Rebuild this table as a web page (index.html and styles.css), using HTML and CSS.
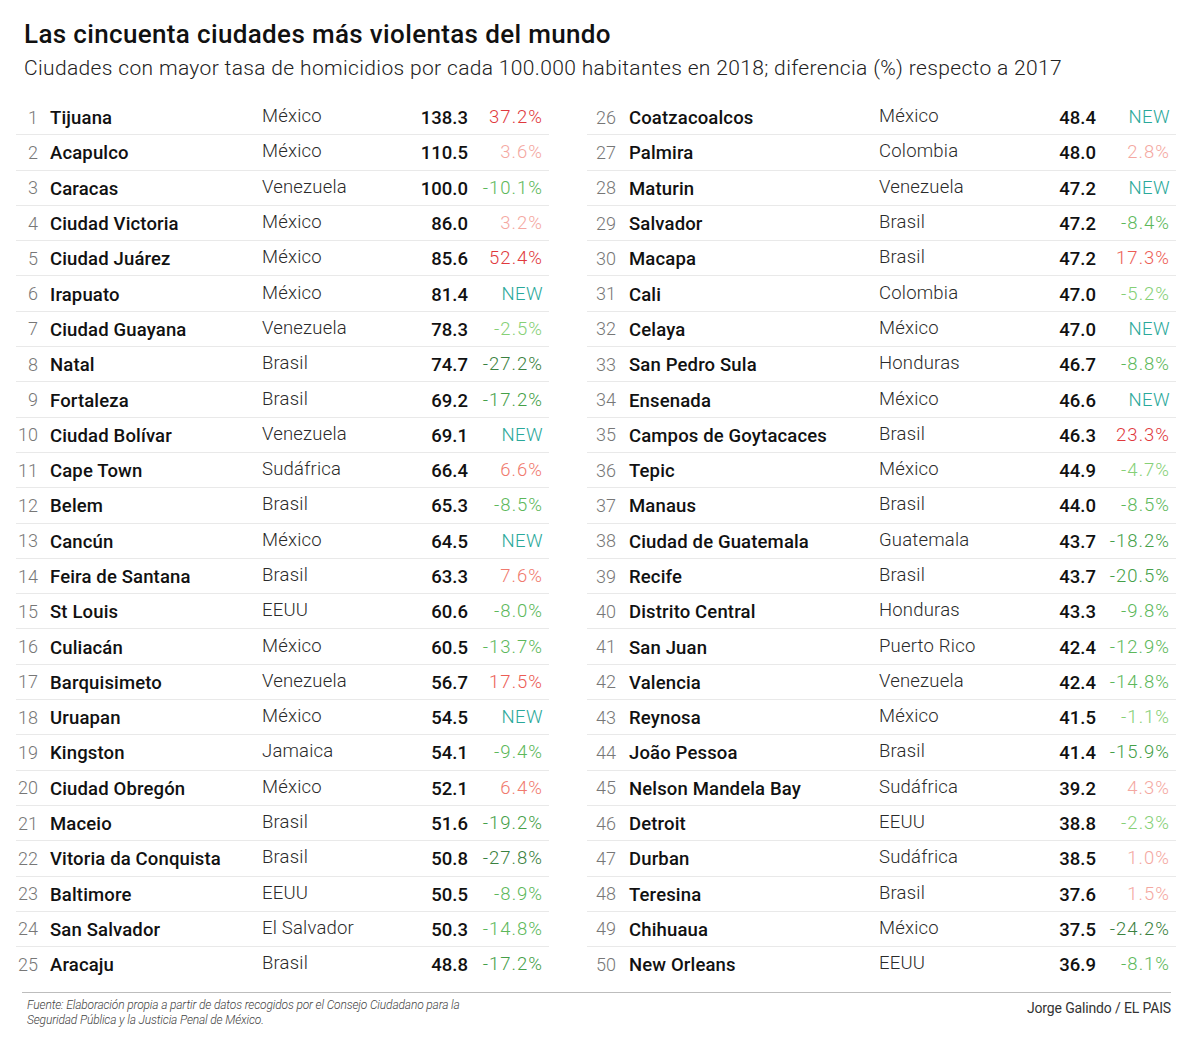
FILE: index.html
```html
<!DOCTYPE html>
<html lang="es">
<head>
<meta charset="utf-8">
<title>Las cincuenta ciudades más violentas del mundo</title>
<link rel="stylesheet" href="styles.css">
</head>
<body>
<header class="head">
  <h1 class="title">Las cincuenta ciudades más violentas del mundo</h1>
  <p class="subtitle">Ciudades con mayor tasa de homicidios por cada 100.000 habitantes en 2018; diferencia (%) respecto a 2017</p>
</header>
<main class="tables">
  <div class="col col-left">
    <div class="row"><span class="rk">1</span><span class="city">Tijuana</span><span class="ctry">México</span><span class="val">138.3</span><span class="pct u4">37.2%</span></div>
    <div class="row"><span class="rk">2</span><span class="city">Acapulco</span><span class="ctry">México</span><span class="val">110.5</span><span class="pct u1">3.6%</span></div>
    <div class="row"><span class="rk">3</span><span class="city">Caracas</span><span class="ctry">Venezuela</span><span class="val">100.0</span><span class="pct d2">-10.1%</span></div>
    <div class="row"><span class="rk">4</span><span class="city">Ciudad Victoria</span><span class="ctry">México</span><span class="val">86.0</span><span class="pct u1">3.2%</span></div>
    <div class="row"><span class="rk">5</span><span class="city">Ciudad Juárez</span><span class="ctry">México</span><span class="val">85.6</span><span class="pct u4">52.4%</span></div>
    <div class="row"><span class="rk">6</span><span class="city">Irapuato</span><span class="ctry">México</span><span class="val">81.4</span><span class="pct new">NEW</span></div>
    <div class="row"><span class="rk">7</span><span class="city">Ciudad Guayana</span><span class="ctry">Venezuela</span><span class="val">78.3</span><span class="pct d1">-2.5%</span></div>
    <div class="row"><span class="rk">8</span><span class="city">Natal</span><span class="ctry">Brasil</span><span class="val">74.7</span><span class="pct d4">-27.2%</span></div>
    <div class="row"><span class="rk">9</span><span class="city">Fortaleza</span><span class="ctry">Brasil</span><span class="val">69.2</span><span class="pct d3">-17.2%</span></div>
    <div class="row"><span class="rk">10</span><span class="city">Ciudad Bolívar</span><span class="ctry">Venezuela</span><span class="val">69.1</span><span class="pct new">NEW</span></div>
    <div class="row"><span class="rk">11</span><span class="city">Cape Town</span><span class="ctry">Sudáfrica</span><span class="val">66.4</span><span class="pct u2">6.6%</span></div>
    <div class="row"><span class="rk">12</span><span class="city">Belem</span><span class="ctry">Brasil</span><span class="val">65.3</span><span class="pct d2">-8.5%</span></div>
    <div class="row"><span class="rk">13</span><span class="city">Cancún</span><span class="ctry">México</span><span class="val">64.5</span><span class="pct new">NEW</span></div>
    <div class="row"><span class="rk">14</span><span class="city">Feira de Santana</span><span class="ctry">Brasil</span><span class="val">63.3</span><span class="pct u2">7.6%</span></div>
    <div class="row"><span class="rk">15</span><span class="city">St Louis</span><span class="ctry">EEUU</span><span class="val">60.6</span><span class="pct d2">-8.0%</span></div>
    <div class="row"><span class="rk">16</span><span class="city">Culiacán</span><span class="ctry">México</span><span class="val">60.5</span><span class="pct d2">-13.7%</span></div>
    <div class="row"><span class="rk">17</span><span class="city">Barquisimeto</span><span class="ctry">Venezuela</span><span class="val">56.7</span><span class="pct u3">17.5%</span></div>
    <div class="row"><span class="rk">18</span><span class="city">Uruapan</span><span class="ctry">México</span><span class="val">54.5</span><span class="pct new">NEW</span></div>
    <div class="row"><span class="rk">19</span><span class="city">Kingston</span><span class="ctry">Jamaica</span><span class="val">54.1</span><span class="pct d2">-9.4%</span></div>
    <div class="row"><span class="rk">20</span><span class="city">Ciudad Obregón</span><span class="ctry">México</span><span class="val">52.1</span><span class="pct u2">6.4%</span></div>
    <div class="row"><span class="rk">21</span><span class="city">Maceio</span><span class="ctry">Brasil</span><span class="val">51.6</span><span class="pct d3">-19.2%</span></div>
    <div class="row"><span class="rk">22</span><span class="city">Vitoria da Conquista</span><span class="ctry">Brasil</span><span class="val">50.8</span><span class="pct d4">-27.8%</span></div>
    <div class="row"><span class="rk">23</span><span class="city">Baltimore</span><span class="ctry">EEUU</span><span class="val">50.5</span><span class="pct d2">-8.9%</span></div>
    <div class="row"><span class="rk">24</span><span class="city">San Salvador</span><span class="ctry">El Salvador</span><span class="val">50.3</span><span class="pct d2">-14.8%</span></div>
    <div class="row"><span class="rk">25</span><span class="city">Aracaju</span><span class="ctry">Brasil</span><span class="val">48.8</span><span class="pct d3">-17.2%</span></div>
  </div>
  <div class="col col-right">
    <div class="row"><span class="rk">26</span><span class="city">Coatzacoalcos</span><span class="ctry">México</span><span class="val">48.4</span><span class="pct new">NEW</span></div>
    <div class="row"><span class="rk">27</span><span class="city">Palmira</span><span class="ctry">Colombia</span><span class="val">48.0</span><span class="pct u1">2.8%</span></div>
    <div class="row"><span class="rk">28</span><span class="city">Maturin</span><span class="ctry">Venezuela</span><span class="val">47.2</span><span class="pct new">NEW</span></div>
    <div class="row"><span class="rk">29</span><span class="city">Salvador</span><span class="ctry">Brasil</span><span class="val">47.2</span><span class="pct d2">-8.4%</span></div>
    <div class="row"><span class="rk">30</span><span class="city">Macapa</span><span class="ctry">Brasil</span><span class="val">47.2</span><span class="pct u3">17.3%</span></div>
    <div class="row"><span class="rk">31</span><span class="city">Cali</span><span class="ctry">Colombia</span><span class="val">47.0</span><span class="pct d1">-5.2%</span></div>
    <div class="row"><span class="rk">32</span><span class="city">Celaya</span><span class="ctry">México</span><span class="val">47.0</span><span class="pct new">NEW</span></div>
    <div class="row"><span class="rk">33</span><span class="city">San Pedro Sula</span><span class="ctry">Honduras</span><span class="val">46.7</span><span class="pct d2">-8.8%</span></div>
    <div class="row"><span class="rk">34</span><span class="city">Ensenada</span><span class="ctry">México</span><span class="val">46.6</span><span class="pct new">NEW</span></div>
    <div class="row"><span class="rk">35</span><span class="city">Campos de Goytacaces</span><span class="ctry">Brasil</span><span class="val">46.3</span><span class="pct u4">23.3%</span></div>
    <div class="row"><span class="rk">36</span><span class="city">Tepic</span><span class="ctry">México</span><span class="val">44.9</span><span class="pct d1">-4.7%</span></div>
    <div class="row"><span class="rk">37</span><span class="city">Manaus</span><span class="ctry">Brasil</span><span class="val">44.0</span><span class="pct d2">-8.5%</span></div>
    <div class="row"><span class="rk">38</span><span class="city">Ciudad de Guatemala</span><span class="ctry">Guatemala</span><span class="val">43.7</span><span class="pct d3">-18.2%</span></div>
    <div class="row"><span class="rk">39</span><span class="city">Recife</span><span class="ctry">Brasil</span><span class="val">43.7</span><span class="pct d3">-20.5%</span></div>
    <div class="row"><span class="rk">40</span><span class="city">Distrito Central</span><span class="ctry">Honduras</span><span class="val">43.3</span><span class="pct d2">-9.8%</span></div>
    <div class="row"><span class="rk">41</span><span class="city">San Juan</span><span class="ctry">Puerto Rico</span><span class="val">42.4</span><span class="pct d2">-12.9%</span></div>
    <div class="row"><span class="rk">42</span><span class="city">Valencia</span><span class="ctry">Venezuela</span><span class="val">42.4</span><span class="pct d2">-14.8%</span></div>
    <div class="row"><span class="rk">43</span><span class="city">Reynosa</span><span class="ctry">México</span><span class="val">41.5</span><span class="pct d1">-1.1%</span></div>
    <div class="row"><span class="rk">44</span><span class="city">João Pessoa</span><span class="ctry">Brasil</span><span class="val">41.4</span><span class="pct d3">-15.9%</span></div>
    <div class="row"><span class="rk">45</span><span class="city">Nelson Mandela Bay</span><span class="ctry">Sudáfrica</span><span class="val">39.2</span><span class="pct u1">4.3%</span></div>
    <div class="row"><span class="rk">46</span><span class="city">Detroit</span><span class="ctry">EEUU</span><span class="val">38.8</span><span class="pct d1">-2.3%</span></div>
    <div class="row"><span class="rk">47</span><span class="city">Durban</span><span class="ctry">Sudáfrica</span><span class="val">38.5</span><span class="pct u1">1.0%</span></div>
    <div class="row"><span class="rk">48</span><span class="city">Teresina</span><span class="ctry">Brasil</span><span class="val">37.6</span><span class="pct u1">1.5%</span></div>
    <div class="row"><span class="rk">49</span><span class="city">Chihuaua</span><span class="ctry">México</span><span class="val">37.5</span><span class="pct d4">-24.2%</span></div>
    <div class="row"><span class="rk">50</span><span class="city">New Orleans</span><span class="ctry">EEUU</span><span class="val">36.9</span><span class="pct d2">-8.1%</span></div>
  </div>
</main>
<footer class="foot">
  <p class="source">Fuente: Elaboración propia a partir de datos recogidos por el Consejo Ciudadano para la<br>Seguridad Pública y la Justicia Penal de México.</p>
  <p class="credit">Jorge Galindo / EL PAIS</p>
</footer>
</body>
</html>
```
FILE: styles.css
```css
* { box-sizing: border-box; }
html, body { margin: 0; padding: 0; background: #fff; }
body {
  width: 1200px;
  font-family: Roboto, "Liberation Sans", sans-serif;
  color: #111;
}
.head { padding: 19px 0 0 24px; }
.title {
  margin: 0;
  font-size: 26px;
  line-height: 31px;
  font-weight: 500;
  color: #111;
  letter-spacing: 0.35px;
}
.subtitle {
  margin: 6px 0 0;
  font-size: 21px;
  line-height: 24px;
  font-weight: 300;
  color: #222;
  letter-spacing: 0.35px;
}
.tables {
  display: grid;
  grid-template-columns: 533px 589px;
  column-gap: 38px;
  padding-left: 16px;
  margin-top: 20px;
}
.row {
  display: grid;
  align-items: center;
  height: 35.3px;
  border-bottom: 1px solid #e9e9e9;
  padding-right: 6px;
}
.row:last-child { border-bottom-color: transparent; }
.col-left .row { grid-template-columns: 22px 224px 130px 76px 75px; }
.col-left .city { padding-left: 12px; }
.col-right .row { grid-template-columns: 29px 263px 128px 89px 74px; }
.col-right .city { padding-left: 13px; }
.rk {
  text-align: right;
  font-size: 18px;
  font-weight: 300;
  color: #777;
}
.city {
  font-size: 18.5px;
  font-weight: 500;
  color: #111;
  white-space: nowrap;
  letter-spacing: 0.15px;
  padding-top: 2px;
}
.ctry {
  font-size: 18.5px;
  font-weight: 300;
  color: #2a2a2a;
  white-space: nowrap;
  letter-spacing: 0.2px;
  padding-bottom: 2px;
}
.val {
  text-align: right;
  font-size: 18.5px;
  font-weight: 500;
  color: #111;
  padding-top: 2px;
}
.pct {
  text-align: right;
  font-size: 18.5px;
  font-weight: 300;
  letter-spacing: 1px;
}
.u4 { color: #e0393d; }
.u3 { color: #ec5d55; }
.u2 { color: #f07a6e; }
.u1 { color: #f4a8a1; }
.d1 { color: #86d076; }
.d2 { color: #5cb85a; }
.d3 { color: #45a048; }
.d4 { color: #3a8140; }
.new { color: #2aa89a; letter-spacing: 0.4px; }
.foot {
  margin: 10px 29px 0 22px;
  border-top: 1px solid #bdbdbd;
  display: flex;
  justify-content: space-between;
  align-items: flex-start;
  padding-top: 5px;
}
.source {
  margin: 0 0 0 5px;
  font-size: 12px;
  line-height: 15px;
  font-style: italic;
  font-weight: 300;
  color: #444;
  letter-spacing: -0.15px;
}
.credit {
  margin: 2px 0 0;
  font-size: 14px;
  line-height: 17px;
  font-weight: 400;
  color: #333;
  letter-spacing: -0.15px;
}
```
